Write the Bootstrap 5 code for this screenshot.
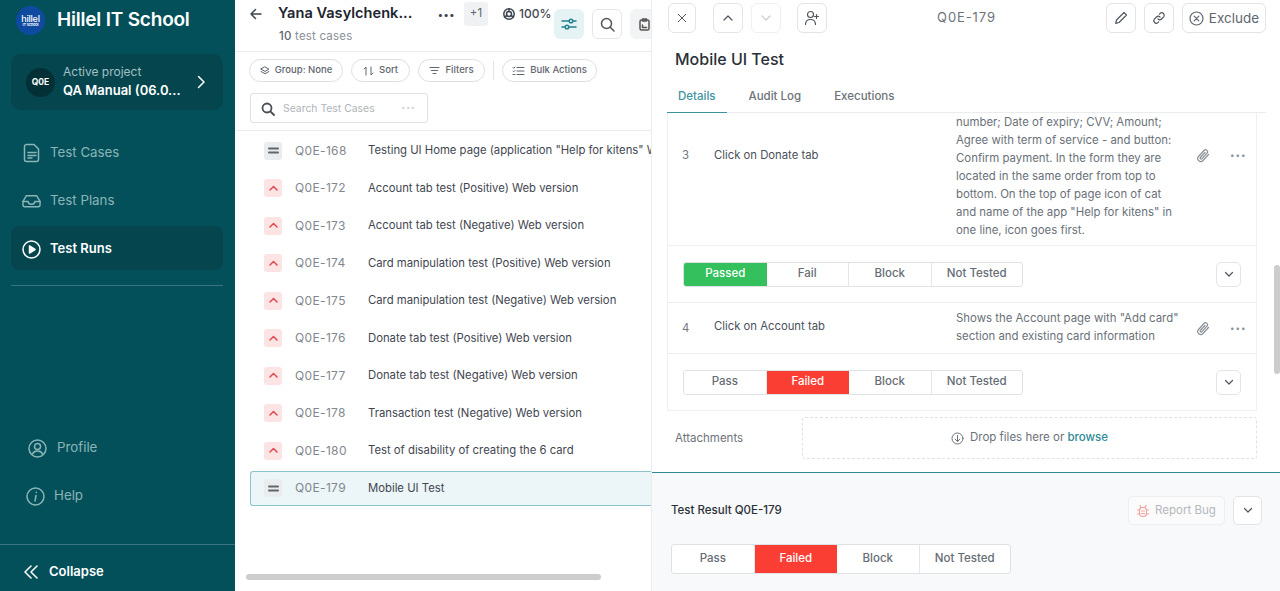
<!DOCTYPE html>
<html lang="en">
<head>
    <meta charset="UTF-8" />
    <meta name="viewport" content="width=device-width, initial-scale=1" />
    <title>Test Runs</title>
    <link href="https://cdn.jsdelivr.net/npm/bootstrap@5.3.0/dist/css/bootstrap.min.css" rel="stylesheet" />
    <style>
    html, body { height: 591px; overflow: hidden; }
    body { font-family: 'Inter', 'Liberation Sans', sans-serif; color: #3f4650; font-size: 12px; }
    svg { display: block; flex: none; fill: none; stroke: currentColor; stroke-width: 1.5; stroke-linecap: round; stroke-linejoin: round; }

    /* sidebar */
    .side { width: 235px; flex: none; background: #04505a; height: 591px; }
    .brand { height: 40px; padding-left: 16px; gap: 12px; color: #fff; font-size: 19px; font-weight: 600; letter-spacing: -.2px; }
    .brand-logo { width: 29px; height: 29px; border-radius: 50%; background: #0d4aa0; color: #fff; line-height: 1; flex-direction: column; }
    .brand-logo b { font-size: 9px; font-weight: 500; }
    .brand-logo i { font-size: 4px; font-style: normal; }
    .proj { margin: 14px 12px 0 11px; height: 56px; border-radius: 10px; background: #04454e; padding: 0 14px 0 15px; color: #fff; }
    .proj-av { width: 29px; height: 29px; border-radius: 50%; background: #032f36; font-size: 8.5px; font-weight: 700; margin-right: 8px; }
    .proj-txt { padding-bottom: 2px; }
    .proj-lbl { font-size: 12px; color: #a4c0c3; line-height: 17px; }
    .proj-name { font-size: 13px; font-weight: 600; line-height: 20px; }
    .side-nav { margin-top: 20px; }
    .side-link { height: 44px; margin: 0 12px 4px 11px; padding: 2px 0 0 12px; gap: 9px; color: #8ab5b8; font-size: 13.3px; text-decoration: none; border-radius: 8px; }
    .side-link.wide-ic { padding-left: 11px; }
    .side-link.on { background: #04454e; color: #fff; font-size: 13px; font-weight: 600; }
    .side-link.prof { margin-left: 17px; padding: 0 0 0 11px; gap: 10px; }
    .side-link.hlp { padding: 0 0 0 15px; margin-bottom: 0; }
    .side-rule { border-top: 1px solid #3a7680; margin: 11px 12px 0 11px; }
    .side-spacer { height: 140px; }
    .side-foot { border-top: 1px solid #3a7680; margin-top: 26px; height: 47px; padding: 8px 0 0 24px; gap: 11px; color: #fff; font-size: 13px; font-weight: 600; }

    /* test case list */
    .mid { width: 416px; flex: none; height: 591px; overflow: hidden; position: relative; }
    .mid-head { height: 52px; border-bottom: 1px solid #e9ebed; padding: 2px 0 0 15px; }
    .head-left { width: 304px; flex: none; }
    .head-top { height: 24px; }
    .case-title { font-size: 14.6px; font-weight: 600; color: #1d2530; margin-left: 16px; width: 150px; white-space: nowrap; }
    .head-dots { width: 14px; margin: 0 12px 0 10px; letter-spacing: 1px; font-size: 10px; font-weight: 700; white-space: nowrap; }
    .plus-one { width: 24px; height: 24px; background: #f0f1f2; border-radius: 3px; color: #5f6670; font-size: 11.5px; }
    .pct { font-size: 12px; font-weight: 500; margin-left: 15px; }
    .case-count { font-size: 11.5px; color: #8a9098; margin: 1px 0 0 29px; letter-spacing: .2px; line-height: 18px; }
    .case-count b { font-weight: 500; color: #5f6670; }
    .sq-btn { width: 30px; height: 30px; border: 1px solid #e4e6e9; border-radius: 6px; background: #fff; color: #555; padding: 0; margin-top: 7px; flex: none; }
    .sq-btn.tint { background: #e6f3f5; border-color: #e6f3f5; color: #25808f; }
    .sq-btn.grey { background: #f2f3f4; border-color: #f2f3f4; padding-left: 8px; }
    .mid-tools { height: 79px; border-bottom: 1px solid #e9ebed; padding: 7px 0 0 14px; }
    .chip { height: 23px; border: 1px solid #dcdfe2; border-radius: 12px; font-size: 9.5px; color: #5f6670; gap: 5px; background: #fff; font-weight: 500; }
    .chip svg { stroke-width: 1; }
    .chip-sep { width: 1px; height: 19px; background: #e2e4e6; }
    .find { width: 178px; height: 30px; border: 1px solid #dfe2e5; border-radius: 3px; margin: 11px 0 0 1px; padding: 1px 11px 0 10px; gap: 8px; color: #b0b4b9; font-size: 10.4px; }
    .find svg { color: #4a4f55; stroke-width: 1.8; }
    .find-more { letter-spacing: 1px; font-size: 7px; color: #d2d4d7; }
    .case-list { padding: 1px 0 0; margin: 0; list-style: none; }
    .case-row { height: 37.5px; padding-left: 29px; font-size: 11.3px; white-space: nowrap; }
    .case-row > span { flex: none; }
    .case-row > .case-name { flex: 1; min-width: 0; overflow: hidden; }
    .case-row.sel { height: 35px; margin: 1px 0 1.5px 15px; padding-left: 13px; background: #ecf5f7; border: 1px solid #8cc4cc; border-right: 0; border-radius: 3px 0 0 3px; }
    .prio { width: 18px; height: 18px; border-radius: 3px; margin-right: 13px; }
    .prio.hi { background: #fde4e4; color: #e5484d; }
    .prio.mid-p { background: #ebecee; color: #60666e; }
    .case-id { width: 73px; color: #82878e; font-size: 12px; letter-spacing: .35px; }
    .h-scroll { position: absolute; left: 11px; bottom: 11px; width: 355px; height: 6px; border-radius: 3px; background: #cdcdcd; }

    /* right panel */
    .detail { width: 629px; flex: none; height: 591px; overflow: hidden; border-left: 1px solid #ececee; position: relative; }
    .det-bar { height: 30px; margin-top: 3px; padding: 0 14px 0 16px; }
    .tool { width: 30px; height: 30px; border: 1px solid #e2e4e7; border-radius: 6px; background: #fff; padding: 0; color: #50565e; flex: none; }
    .tool svg { stroke-width: 1.2; }
    .tool.close-x { width: 28px; margin-right: 17px; }
    .tool.off { color: #c8cbd0; border-color: #eeeff1; }
    .tool.wide { width: 84px; gap: 5px; font-size: 13.5px; color: #5f6670; }
    .tool + .tool { margin-left: 8px; }
    .tool.close-x + .tool { margin-left: 0; }
    .tool.add-user { margin-left: 16px; }
    .det-key { flex: 1; text-align: center; font-size: 13px; color: #6c7279; letter-spacing: .9px; }
    .det-title { font-size: 16px; font-weight: 500; color: #2a3038; margin: 16px 0 0 23px; line-height: 20px; }
    .det-tabs { margin: 17px 14px 0 15px; height: 27px; border-bottom: 1px solid #e9ebed; font-size: 11.5px; font-weight: 500; color: #6c7279; }
    .det-tab { padding: 2px 11px 0; height: 27px; margin-right: 11px; border-bottom: 1px solid transparent; }
    .det-tab.on { color: #3d93a0; border-bottom-color: #3d93a0; }
    .steps { margin: 0 23px 0 15px; border: 1px solid #eeeff1; border-top: 0; overflow: hidden; }
    .step { padding-left: 14px; border-bottom: 1px solid #eeeff1; color: #4a505a; font-size: 11.3px; }
    /* step 3 is scrolled, its top part lies above the list edge */
    .step.scrolled { height: 181px; margin-top: -48px; }
    .step.scrolled .step-exp { padding-top: 41px; }
    .step.short { height: 51px; }
    .step.short .step-act { margin-top: -3px; }
    .step.short .step-exp { margin-top: -2px; }
    .step-no { width: 32px; color: #70767e; }
    .step-act { width: 242px; }
    .step-exp { width: 228px; line-height: 18px; color: #6a7078; font-size: 11.4px; }
    .step-ic { color: #8a9098; gap: 20px; margin-left: 12px; }
    .step-ic svg { stroke-width: 1.2; }
    .step-dots { letter-spacing: 1px; font-size: 8px; }
    .step-res { height: 57px; padding: 0 15px; border-bottom: 1px solid #eeeff1; }
    .step-res:last-child { border-bottom: 0; height: 56px; }
    .seg { border: 1px solid #dfe2e5; border-radius: 3px; background: #fff; font-size: 11.5px; color: #666c74; height: 25px; overflow: hidden; }
    .seg-item { width: 82.5px; border-right: 1px solid #e4e6e9; font-weight: 500; }
    .seg-item:last-child { width: 90.5px; border-right: 0; }
    .seg-item.pass { background: #34c05c; color: #fff; border-right: 0; }
    .seg-item.fail { background: #fb3e33; color: #fff; border-right: 0; }
    .more-btn { width: 25px; height: 25px; border: 1px solid #e2e4e7; border-radius: 5px; background: #fff; color: #50565e; padding: 0; }
    .more-btn svg { stroke-width: 1.2; }
    .attach { margin: 6px 23px 0 23px; font-size: 11.5px; color: #6c7279; }
    .attach-lbl { width: 127px; padding-top: 1px; }
    .drop { flex: 1; height: 42px; border: 1px dashed #dfe2e5; border-radius: 3px; gap: 6px; color: #6c7279; }
    .drop svg { stroke-width: 1; }
    .drop a { color: #2d8a96; text-decoration: none; font-weight: 500; }
    .result { position: absolute; left: 0; right: 0; top: 472px; bottom: 0; border-top: 1px solid #2f8a96; background: #f8f9fa; padding: 23px 18px 0 19px; }
    .result-ttl { font-size: 11.5px; font-weight: 500; color: #2a3038; }
    .bug-btn { width: 97px; height: 29px; gap: 6px; border: 1px solid #eeeff1; border-radius: 5px; background: #fbfbfc; color: #b4b8bd; font-size: 11.5px; padding: 0; }
    .bug-btn svg { color: #f5a49e; stroke-width: 1.2; }
    .result .more-btn { width: 29px; height: 29px; margin-left: 8px; }
    .result .seg { height: 30px; margin-top: 19px; }
    .v-scroll { position: absolute; right: 0; top: 265px; width: 6px; height: 109px; border-radius: 3px; background: #cdcdcd; }
    </style>
</head>
<body class="d-flex">

    <aside class="side d-flex flex-column">
        <div class="brand d-flex align-items-center">
            <div class="brand-logo d-flex align-items-center justify-content-center"><b>hillel</b><i>IT school</i></div>
            <span>Hillel IT School</span>
        </div>
        <div class="proj d-flex align-items-center">
            <div class="proj-av d-flex align-items-center justify-content-center">Q0E</div>
            <div class="proj-txt flex-grow-1">
                <div class="proj-lbl">Active project</div>
                <div class="proj-name">QA Manual (06.0...</div>
            </div>
            <svg width="16" height="16" viewBox="0 0 16 16"><path d="M5.500 2.500 11 8l-5.500 5.500"/></svg>
        </div>
        <nav class="side-nav">
            <a class="side-link d-flex align-items-center" href="#">
                <svg width="18" height="20" viewBox="0 0 18 20"><path d="M3 1.500h8l4.500 4.500v10.500a2 2 0 0 1-2 2h-10a2 2 0 0 1-2-2v-13a2 2 0 0 1 2-2z"/><path d="M5 9.500h8M5 12.500h8M5 15h4"/></svg>
                Test Cases
            </a>
            <a class="side-link wide-ic d-flex align-items-center" href="#">
                <svg width="19" height="14" viewBox="0 0 20 14"><path d="M1 7.500 4.500 1.500h11L19 7.500v3.500a2 2 0 0 1-2 2H3a2 2 0 0 1-2-2z"/><path d="M1 7.500h5.500a3.500 3 0 0 0 7 0H19"/></svg>
                Test Plans
            </a>
            <a class="side-link wide-ic on d-flex align-items-center" href="#">
                <svg width="19" height="19" viewBox="0 0 19 19"><circle cx="9.500" cy="9.500" r="8.500"/><path d="M7.500 6v7l5.500-3.500z" fill="currentColor"/></svg>
                Test Runs
            </a>
        </nav>
        <div class="side-rule"></div>
        <div class="side-spacer"></div>
        <a class="side-link prof d-flex align-items-center" href="#">
            <svg width="19" height="19" viewBox="0 0 19 19"><circle cx="9.500" cy="9.500" r="8.500"/><circle cx="9.500" cy="7.500" r="3"/><path d="M4.500 15c1-2.500 2.800-3 5-3s4 .5 5 3"/></svg>
            Profile
        </a>
        <a class="side-link hlp d-flex align-items-center" href="#">
            <svg width="19" height="19" viewBox="0 0 19 19"><circle cx="9.500" cy="9.500" r="8.500"/><path d="M10 8.500 9 14M10.300 5.300v.1"/></svg>
            Help
        </a>
        <div class="side-foot d-flex align-items-center">
            <svg width="14" height="14" viewBox="0 0 14 14"><path d="M7 1 1 7l6 6M13 1 7 7l6 6"/></svg>
            Collapse
        </div>
    </aside>

    <main class="mid">
        <div class="mid-head d-flex align-items-start">
            <div class="head-left">
                <div class="head-top d-flex align-items-center">
                    <svg width="12" height="12" viewBox="0 0 12 12"><path d="M11 6H1M5.500 1.500 1 6l4.500 4.500"/></svg>
                    <span class="case-title">Yana Vasylchenk...</span>
                    <span class="head-dots">•••</span>
                    <div class="plus-one d-flex align-items-center justify-content-center">+1</div>
                    <div class="pct d-flex align-items-center gap-1">
                        <svg width="12" height="12" viewBox="0 0 12 12"><circle cx="6" cy="6" r="5.200"/><circle cx="6" cy="6" r="2.500"/><path d="M6 .8v2.700M8 7.500l2.500 1.500M4 7.500 1.500 9"/></svg>
                        100%
                    </div>
                </div>
                <div class="case-count"><b>10</b> test cases</div>
            </div>
            <div class="d-flex gap-2">
                <button class="sq-btn tint d-flex align-items-center justify-content-center"><svg width="16" height="16" viewBox="0 0 16 16"><path d="M1 5h14M1 11h14"/><circle cx="10" cy="5" r="1.800" fill="#e6f3f5"/><circle cx="6" cy="11" r="1.800" fill="#e6f3f5"/></svg></button>
                <button class="sq-btn d-flex align-items-center justify-content-center"><svg width="15" height="15" viewBox="0 0 15 15"><circle cx="6.500" cy="6.500" r="5"/><path d="m10.500 10.500 3.500 3.500"/></svg></button>
                <button class="sq-btn grey d-flex align-items-center justify-content-start"><svg width="11" height="13" viewBox="0 0 11 13"><rect x="1" y="2" width="9" height="10" rx="1.500"/><path d="M3.500 1h4v2h-4zM3.500 7v2.500h4"/></svg></button>
            </div>
        </div>
        <div class="mid-tools">
            <div class="d-flex align-items-center gap-2">
                <div class="chip d-flex align-items-center justify-content-center" style="width:94px"><svg width="10" height="10" viewBox="0 0 10 10"><path d="M5 1 9 3.200 5 5.400 1 3.200zM1 5.500l4 2.200 4-2.200"/></svg>Group: None</div>
                <div class="chip d-flex align-items-center justify-content-center" style="width:59px"><svg width="11" height="10" viewBox="0 0 11 10"><path d="M3 9V1L1 3M8 1v8l2-2"/></svg>Sort</div>
                <div class="chip d-flex align-items-center justify-content-center" style="width:67px"><svg width="11" height="9" viewBox="0 0 11 9"><path d="M1 1.500h9M2.500 4.500h6M4 7.500h3"/></svg>Filters</div>
                <div class="chip-sep"></div>
                <div class="chip d-flex align-items-center justify-content-center" style="width:95px"><svg width="13" height="10" viewBox="0 0 13 10"><path d="M5 1.500h7M5 5h7M5 8.500h7M1 1.500l.8.8L3 1M1 5l.8.800L3 4.500M1 8.500h2"/></svg>Bulk Actions</div>
            </div>
            <div class="find d-flex align-items-center">
                <svg width="14" height="14" viewBox="0 0 14 14"><circle cx="6" cy="6" r="4.500"/><path d="m9.500 9.500 3.500 3.500"/></svg>
                <span class="flex-grow-1">Search Test Cases</span>
                <span class="find-more">•••</span>
            </div>
        </div>
        <ul class="case-list" id="caseList"></ul>
        <div class="h-scroll"></div>
    </main>

    <section class="detail">
        <div class="det-bar d-flex align-items-center">
            <button class="tool close-x d-flex align-items-center justify-content-center"><svg width="10" height="10" viewBox="0 0 12 12"><path d="m1.500 1.500 9 9M10.500 1.500l-9 9"/></svg></button>
            <button class="tool d-flex align-items-center justify-content-center"><svg width="12" height="8" viewBox="0 0 12 8"><path d="m2 6 4-4 4 4"/></svg></button>
            <button class="tool off d-flex align-items-center justify-content-center"><svg width="12" height="8" viewBox="0 0 12 8"><path d="m2 2 4 4 4-4"/></svg></button>
            <button class="tool add-user d-flex align-items-center justify-content-center"><svg width="16" height="16" viewBox="0 0 16 16"><circle cx="6.500" cy="4.500" r="3"/><path d="M1.500 14.500c0-3.200 2-5 5-5s5 1.800 5 5M12.500 4.500v4M10.500 6.500h4"/></svg></button>
            <div class="det-key">Q0E-179</div>
            <button class="tool d-flex align-items-center justify-content-center"><svg width="14" height="14" viewBox="0 0 14 14"><path d="M10 1.500 12.500 4 5 11.500l-3.300.800L2.500 9z"/></svg></button>
            <button class="tool d-flex align-items-center justify-content-center"><svg width="14" height="14" viewBox="0 0 14 14"><path d="M6 8a2.500 2.500 0 0 0 3.500 0l2.200-2.200A2.500 2.500 0 0 0 8.200 2.300L7.300 3.200M8 6a2.500 2.500 0 0 0-3.500 0L2.300 8.200a2.500 2.500 0 0 0 3.500 3.500l.9-.9"/></svg></button>
            <button class="tool wide d-flex align-items-center justify-content-center"><svg width="15" height="15" viewBox="0 0 15 15"><circle cx="7.500" cy="7.500" r="6.500"/><path d="m5.200 5.200 4.600 4.600M9.800 5.200l-4.600 4.600"/></svg>Exclude</button>
        </div>
        <div class="det-title">Mobile UI Test</div>
        <div class="det-tabs d-flex">
            <div class="det-tab on">Details</div>
            <div class="det-tab">Audit Log</div>
            <div class="det-tab">Executions</div>
        </div>
        <div class="steps">
            <div class="step scrolled d-flex align-items-center">
                <div class="step-no">3</div>
                <div class="step-act">Click on Donate tab</div>
                <div class="step-exp">number; Date of expiry; CVV; Amount; Agree with term of service - and button: Confirm payment. In the form they are located in the same order from top to bottom. On the top of page icon of cat and name of the app "Help for kitens" in one line, icon goes first.</div>
                <div class="step-ic d-flex align-items-center">
                    <svg width="14" height="15" viewBox="0 0 14 15"><path d="M12.500 6.500 7 12.500a3 3 0 0 1-4.500-4L8 2.500a2 2 0 0 1 3 2.700L5.800 10.800a1 1 0 0 1-1.500-1.300L9 4.500"/></svg>
                    <span class="step-dots">•••</span>
                </div>
            </div>
            <div class="step-res d-flex align-items-center justify-content-between">
                <div class="seg d-flex">
                    <div class="seg-item pass d-flex align-items-center justify-content-center">Passed</div>
                    <div class="seg-item d-flex align-items-center justify-content-center">Fail</div>
                    <div class="seg-item d-flex align-items-center justify-content-center">Block</div>
                    <div class="seg-item d-flex align-items-center justify-content-center">Not Tested</div>
                </div>
                <button class="more-btn d-flex align-items-center justify-content-center"><svg width="10" height="7" viewBox="0 0 10 7"><path d="m1.500 1.500 3.500 3.500 3.500-3.500"/></svg></button>
            </div>
            <div class="step short d-flex align-items-center">
                <div class="step-no">4</div>
                <div class="step-act">Click on Account tab</div>
                <div class="step-exp">Shows the Account page with "Add card" section and existing card information</div>
                <div class="step-ic d-flex align-items-center">
                    <svg width="14" height="15" viewBox="0 0 14 15"><path d="M12.500 6.500 7 12.500a3 3 0 0 1-4.500-4L8 2.500a2 2 0 0 1 3 2.700L5.800 10.800a1 1 0 0 1-1.500-1.300L9 4.500"/></svg>
                    <span class="step-dots">•••</span>
                </div>
            </div>
            <div class="step-res d-flex align-items-center justify-content-between">
                <div class="seg d-flex">
                    <div class="seg-item d-flex align-items-center justify-content-center">Pass</div>
                    <div class="seg-item fail d-flex align-items-center justify-content-center">Failed</div>
                    <div class="seg-item d-flex align-items-center justify-content-center">Block</div>
                    <div class="seg-item d-flex align-items-center justify-content-center">Not Tested</div>
                </div>
                <button class="more-btn d-flex align-items-center justify-content-center"><svg width="10" height="7" viewBox="0 0 10 7"><path d="m1.500 1.500 3.500 3.500 3.500-3.500"/></svg></button>
            </div>
        </div>
        <div class="attach d-flex align-items-center">
            <div class="attach-lbl">Attachments</div>
            <div class="drop d-flex align-items-center justify-content-center">
                <svg width="13" height="13" viewBox="0 0 13 13"><circle cx="6.500" cy="6.500" r="5.500"/><path d="M6.500 3.500v6M4.200 7.200l2.300 2.300 2.300-2.300"/></svg>
                <span>Drop files here or <a href="#">browse</a></span>
            </div>
        </div>
        <div class="v-scroll"></div>
        <div class="result">
            <div class="d-flex align-items-center justify-content-between">
                <div class="result-ttl">Test Result Q0E-179</div>
                <div class="d-flex">
                    <button class="bug-btn d-flex align-items-center justify-content-center"><svg width="12" height="14" viewBox="0 0 12 14"><rect x="2.500" y="3.500" width="7" height="9" rx="3"/><path d="M4 3.500 3 1.500M8 3.500l1-2M.5 6h2M9.500 6h2M.5 10h2M9.500 10h2M4.500 7h3M4.500 9.500h3"/></svg>Report Bug</button>
                    <button class="more-btn d-flex align-items-center justify-content-center"><svg width="10" height="7" viewBox="0 0 10 7"><path d="m1.500 1.500 3.500 3.500 3.500-3.500"/></svg></button>
                </div>
            </div>
            <div class="seg d-inline-flex">
                <div class="seg-item d-flex align-items-center justify-content-center">Pass</div>
                <div class="seg-item fail d-flex align-items-center justify-content-center">Failed</div>
                <div class="seg-item d-flex align-items-center justify-content-center">Block</div>
                <div class="seg-item d-flex align-items-center justify-content-center">Not Tested</div>
            </div>
        </div>
    </section>

    <script src="https://cdn.jsdelivr.net/npm/bootstrap@5.3.0/dist/js/bootstrap.bundle.min.js"></script>
    <script>
        const cases = [
            ["Q0E-168", "Testing UI Home page (application \"Help for kitens\" W", "mid-p"],
            ["Q0E-172", "Account tab test (Positive) Web version", "hi"],
            ["Q0E-173", "Account tab test (Negative) Web version", "hi"],
            ["Q0E-174", "Card manipulation test (Positive) Web version", "hi"],
            ["Q0E-175", "Card manipulation test (Negative) Web version", "hi"],
            ["Q0E-176", "Donate tab test (Positive) Web version", "hi"],
            ["Q0E-177", "Donate tab test (Negative) Web version", "hi"],
            ["Q0E-178", "Transaction test (Negative) Web version", "hi"],
            ["Q0E-180", "Test of disability of creating the 6 card", "hi"],
            ["Q0E-179", "Mobile UI Test", "mid-p"]
        ];

        // Fill the test case list
        const list = document.getElementById('caseList');
        for (const [id, title, prio] of cases) {
            const li = document.createElement('li');
            li.className = 'case-row d-flex align-items-center' + (id === 'Q0E-179' ? ' sel' : '');
            const glyph = prio === 'hi'
                ? '<path d="m3 8 3.500-3.500L10 8"/>'
                : '<path d="M2 4.500h9M2 8.500h9" stroke-width="2"/>';
            li.innerHTML = `<span class="prio ${prio} d-flex align-items-center justify-content-center"><svg width="13" height="13" viewBox="0 0 13 13">${glyph}</svg></span><span class="case-id">${id}</span><span class="case-name">${title}</span>`;
            list.appendChild(li);
        }
    </script>
</body>
</html>
